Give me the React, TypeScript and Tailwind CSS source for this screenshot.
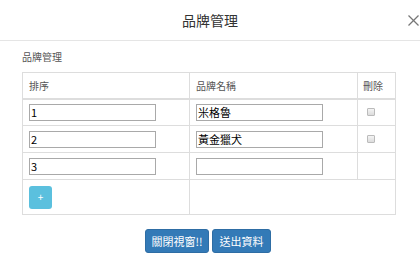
const rows = [
  { order: "1", name: "米格魯", del: true },
  { order: "2", name: "黃金獵犬", del: true },
  { order: "3", name: "", del: false },
];

const font = { fontFamily: '"Noto Sans CJK TC", "Liberation Sans", sans-serif' };

const App = () => {
  return (
    <div className="w-[420px] h-[280px] bg-white text-[#333] overflow-hidden" style={font}>
      <div className="relative h-[41px] border-b border-[#e5e5e5] flex items-center justify-center">
        <h4 className="text-[14px] leading-none text-[#333]">品牌管理</h4>
        <button className="absolute right-[1px] top-[15px] w-[11px] h-[11px]">
          <svg viewBox="0 0 11 11" className="w-[11px] h-[11px]" stroke="#777" strokeWidth="1.3">
            <line x1="0.5" y1="0.5" x2="10.5" y2="10.5" />
            <line x1="10.5" y1="0.5" x2="0.5" y2="10.5" />
          </svg>
        </button>
      </div>

      <div className="px-[22px]">
        <div className="h-[31px] flex items-center text-[10px] text-[#555]">品牌管理</div>

        <table className="w-[373px] border-collapse border border-[#ddd] text-[10px] table-fixed">
          <colgroup>
            <col className="w-[167px]" />
            <col className="w-[168px]" />
            <col className="w-[38px]" />
          </colgroup>
          <thead>
            <tr className="h-[26px] text-[#555]">
              <th className="border border-[#ddd] border-b-2 font-normal text-left px-[6px]">排序</th>
              <th className="border border-[#ddd] border-b-2 font-normal text-left px-[6px]">品牌名稱</th>
              <th className="border border-[#ddd] border-b-2 font-normal text-left px-[5px]">刪除</th>
            </tr>
          </thead>
          <tbody>
            {rows.map((r) => (
              <tr key={r.order} className="h-[27px]">
                <td className="border border-[#ddd] px-[6px]">
                  <input
                    defaultValue={r.order}
                    className="block w-[127px] h-[17px] border border-[#a9a9a9] px-[1px] text-[11px] text-black outline-none"
                    style={font}
                  />
                </td>
                <td className="border border-[#ddd] px-[6px]">
                  <input
                    defaultValue={r.name}
                    className="block w-[127px] h-[17px] border border-[#a9a9a9] px-[1px] text-[11px] text-black outline-none"
                    style={font}
                  />
                </td>
                <td className="border border-[#ddd] px-[9px]">
                  {r.del && (
                    <span className="block w-[8px] h-[8px] rounded-[1px] border border-[#bbb] bg-gradient-to-b from-[#f4f4f4] to-[#dcdcdc]" />
                  )}
                </td>
              </tr>
            ))}
            <tr className="h-[35px]">
              <td className="border border-[#ddd] px-[6px]">
                <button className="w-[23px] h-[23px] rounded-[3px] bg-[#5bc0de] text-white text-[10px] leading-none flex items-center justify-center">
                  +
                </button>
              </td>
              <td colSpan={2} className="border border-[#ddd]" />
            </tr>
          </tbody>
        </table>
      </div>

      <div className="mt-[14px] flex justify-center gap-[3px] pr-[4px]">
        <button className="h-[24px] w-[64px] rounded-[3px] bg-[#337ab7] border border-[#2e6da4] text-white text-[11px]">
          關閉視窗!!
        </button>
        <button className="h-[24px] w-[59px] rounded-[3px] bg-[#337ab7] border border-[#2e6da4] text-white text-[11px]">
          送出資料
        </button>
      </div>
    </div>
  );
};

export default App;
